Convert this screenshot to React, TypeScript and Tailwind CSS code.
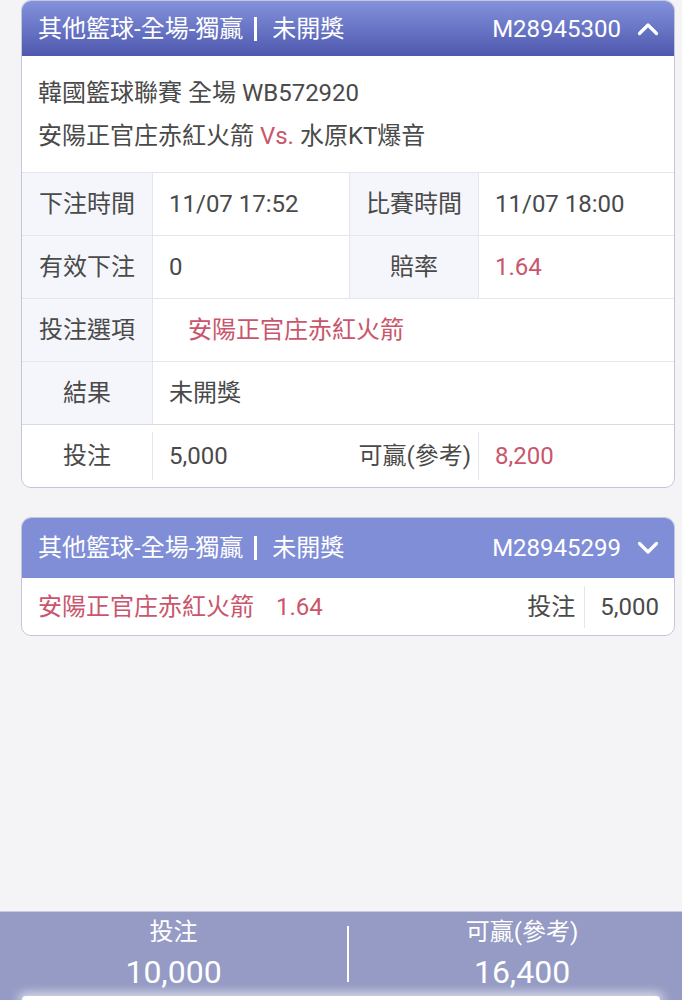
const font = { fontFamily: 'Roboto, "Noto Sans CJK TC", sans-serif' };

function Chevron({ up }: { up?: boolean }) {
  return (
    <svg width="22" height="14" viewBox="0 0 22 14" fill="none" stroke="currentColor" strokeWidth="3.2" strokeLinecap="round" strokeLinejoin="round">
      {up ? <polyline points="2.5 11.5 11 3 19.5 11.5" /> : <polyline points="2.5 2.5 11 11 19.5 2.5" />}
    </svg>
  );
}

function DetailCard() {
  return (
    <div className="overflow-hidden rounded-[10px] border border-[#c4c7dc] bg-white">
      {/* header */}
      <div className="flex h-[55px] items-center justify-between bg-gradient-to-b from-[#8492dc] to-[#4f58ae] pl-4 pr-[15px] text-[24px] text-white">
        <div className="flex items-center">
          <span>其他籃球-全場-獨贏</span>
          <span className="ml-[11px] mr-[15px] h-[24px] w-[3px] bg-white" />
          <span>未開獎</span>
        </div>
        <div className="flex items-center gap-[16px]">
          <span>M28945300</span>
          <Chevron up />
        </div>
      </div>

      {/* match info */}
      <div className="flex flex-col gap-[11px] px-4 pt-[21px] pb-[20px] text-[24px] leading-[32px] text-[#4a4a4a]">
        <div>韓國籃球聯賽 全場 WB572920</div>
        <div>
          安陽正官庄赤紅火箭 <span className="text-[#c9566c]">Vs.</span> 水原KT爆音
        </div>
      </div>

      {/* detail table */}
      <div className="text-[24px] text-[#4a4a4a]">
        <div className="grid h-[63px] grid-cols-[130px_197px_129px_1fr] border-t border-[#e3e5ef]">
          <div className="flex items-center justify-center bg-[#f5f6fb]">下注時間</div>
          <div className="flex items-center border-l border-[#e3e5ef] pl-4">11/07 17:52</div>
          <div className="flex items-center justify-center border-l border-[#e3e5ef] bg-[#f5f6fb]">比賽時間</div>
          <div className="flex items-center border-l border-[#e3e5ef] pl-4">11/07 18:00</div>
        </div>
        <div className="grid h-[63px] grid-cols-[130px_197px_129px_1fr] border-t border-[#e3e5ef]">
          <div className="flex items-center justify-center bg-[#f5f6fb]">有效下注</div>
          <div className="flex items-center border-l border-[#e3e5ef] pl-4">0</div>
          <div className="flex items-center justify-center border-l border-[#e3e5ef] bg-[#f5f6fb]">賠率</div>
          <div className="flex items-center border-l border-[#e3e5ef] pl-4 text-[#c9566c]">1.64</div>
        </div>
        <div className="grid h-[63px] grid-cols-[130px_1fr] border-t border-[#e3e5ef]">
          <div className="flex items-center justify-center bg-[#f5f6fb]">投注選項</div>
          <div className="flex items-center border-l border-[#e3e5ef] pl-[35px] text-[#c9566c]">安陽正官庄赤紅火箭</div>
        </div>
        <div className="grid h-[63px] grid-cols-[130px_1fr] border-t border-[#e3e5ef]">
          <div className="flex items-center justify-center bg-[#f5f6fb]">結果</div>
          <div className="flex items-center border-l border-[#e3e5ef] pl-4">未開獎</div>
        </div>
        <div className="grid h-[63px] grid-cols-[130px_197px_129px_1fr] items-center border-t border-[#d9dbe8]">
          <div className="flex items-center justify-center">投注</div>
          <div className="flex h-[48px] items-center border-l border-[#e3e5ef] pl-4">5,000</div>
          <div className="flex items-center justify-end pr-[7px]">可贏(參考)</div>
          <div className="flex h-[48px] items-center border-l border-[#e3e5ef] pl-4 text-[#c9566c]">8,200</div>
        </div>
      </div>
    </div>
  );
}

function SummaryCard() {
  return (
    <div className="overflow-hidden rounded-[10px] border border-[#c4c7dc] bg-white">
      <div className="flex h-[60px] items-center justify-between bg-[#7f8ed6] pl-4 pr-[15px] text-[24px] text-white">
        <div className="flex items-center">
          <span>其他籃球-全場-獨贏</span>
          <span className="ml-[11px] mr-[15px] h-[24px] w-[3px] bg-white" />
          <span>未開獎</span>
        </div>
        <div className="flex items-center gap-[16px]">
          <span>M28945299</span>
          <Chevron />
        </div>
      </div>
      <div className="flex h-[57px] items-center justify-between pl-4 pr-[15px] text-[24px]">
        <div className="flex items-center gap-[22px] text-[#c9566c]">
          <span>安陽正官庄赤紅火箭</span>
          <span>1.64</span>
        </div>
        <div className="flex items-center text-[#4a4a4a]">
          <span className="pr-[9px]">投注</span>
          <span className="h-[42px] w-px bg-[#e3e5ef]" />
          <span className="pl-[15px]">5,000</span>
        </div>
      </div>
    </div>
  );
}

export default function App() {
  return (
    <div className="flex h-screen flex-col bg-[#f4f4f6]" style={font}>
      <div className="flex flex-1 flex-col gap-[29px] pl-[21px] pr-[7px]">
        <DetailCard />
        <SummaryCard />
      </div>

      {/* totals bar */}
      <div className="flex flex-col border-t border-[#c9cbe0] bg-[#959bc4] text-white">
        <div className="flex h-[84px] items-center">
          <div className="flex w-[347px] flex-col items-center">
            <span className="text-[24px] leading-[30px]">投注</span>
            <span className="mt-[6px] text-[32px] leading-[38px]">10,000</span>
          </div>
          <div className="h-[56px] w-[2px] bg-white" />
          <div className="flex flex-1 flex-col items-center pl-[13px]">
            <span className="text-[24px] leading-[30px]">可贏(參考)</span>
            <span className="mt-[6px] text-[32px] leading-[38px]">16,400</span>
          </div>
        </div>
        <div className="mx-[22px] h-[4px] rounded-t-[14px] bg-white shadow-[0_0_10px_4px_rgba(255,255,255,0.6)]" />
      </div>
    </div>
  );
}
